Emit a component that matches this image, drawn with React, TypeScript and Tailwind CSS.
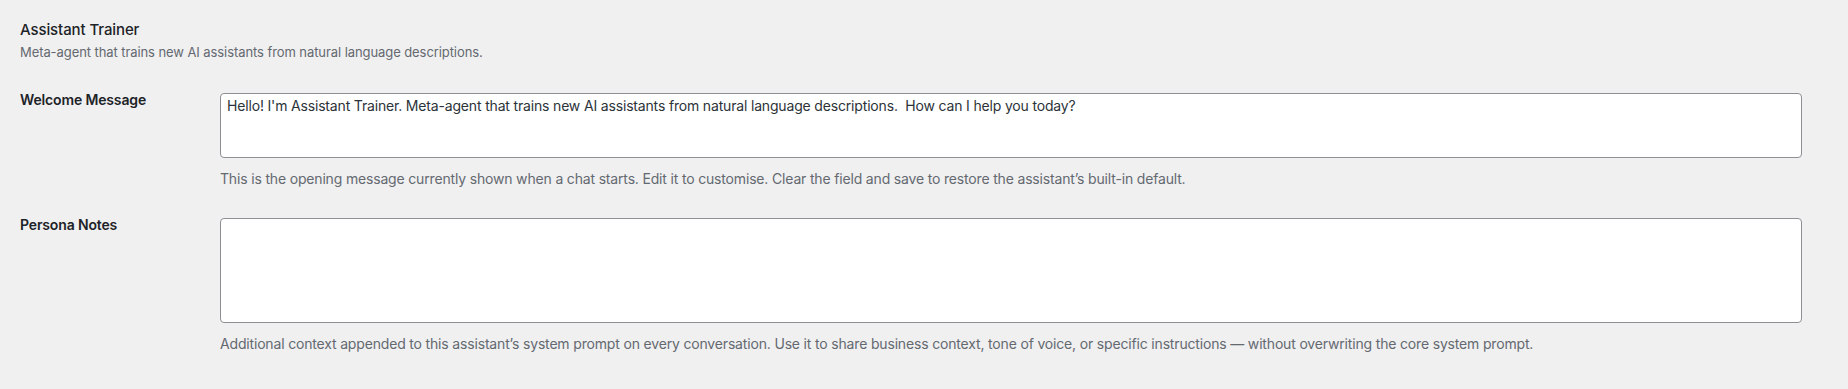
import React from "react";

type FieldProps = {
  label: string;
  value: string;
  height: string;
  help: string;
};

const Field = ({ label, value, height, help }: FieldProps) => {
  return (
    <div className="flex items-start">
      <label className="mt-[1px] w-[200px] shrink-0 text-[14px] font-semibold leading-[18px] tracking-[-0.15px] text-[#1d2327]">
        {label}
      </label>
      <div className="flex min-w-0 flex-1 flex-col">
        <textarea
          defaultValue={value}
          className={`mt-[3px] block w-full resize-none rounded-[4px] border border-[#8c8f94] bg-white px-[6px] py-[2px] text-[14px] leading-[20px] tracking-[-0.17px] text-[#2c3338] outline-none ${height}`}
        />
        <p className="mt-[11px] text-[14px] leading-[20px] tracking-[-0.17px] text-[#646970]">{help}</p>
      </div>
    </div>
  );
};

export default function App() {
  return (
    <div className="h-[389px] bg-[#f0f0f1] pl-[20px] pr-[46px] pt-[20px] font-['Inter',sans-serif]">
      <h3 className="text-[15px] font-medium leading-[20px] tracking-[-0.1px] text-[#1d2327]">Assistant Trainer</h3>
      <p className="mt-[3px] text-[13px] leading-[18px] tracking-[-0.08px] text-[#646970]">
        Meta-agent that trains new AI assistants from natural language descriptions.
      </p>

      <div className="mt-[29px] flex flex-col gap-[26px]">
        <Field
          label="Welcome Message"
          height="h-[65px]"
          value="Hello! I'm Assistant Trainer. Meta-agent that trains new AI assistants from natural language descriptions.  How can I help you today?"
          help="This is the opening message currently shown when a chat starts. Edit it to customise. Clear the field and save to restore the assistant’s built-in default."
        />
        <Field
          label="Persona Notes"
          height="h-[105px]"
          value=""
          help="Additional context appended to this assistant’s system prompt on every conversation. Use it to share business context, tone of voice, or specific instructions — without overwriting the core system prompt."
        />
      </div>
    </div>
  );
}
